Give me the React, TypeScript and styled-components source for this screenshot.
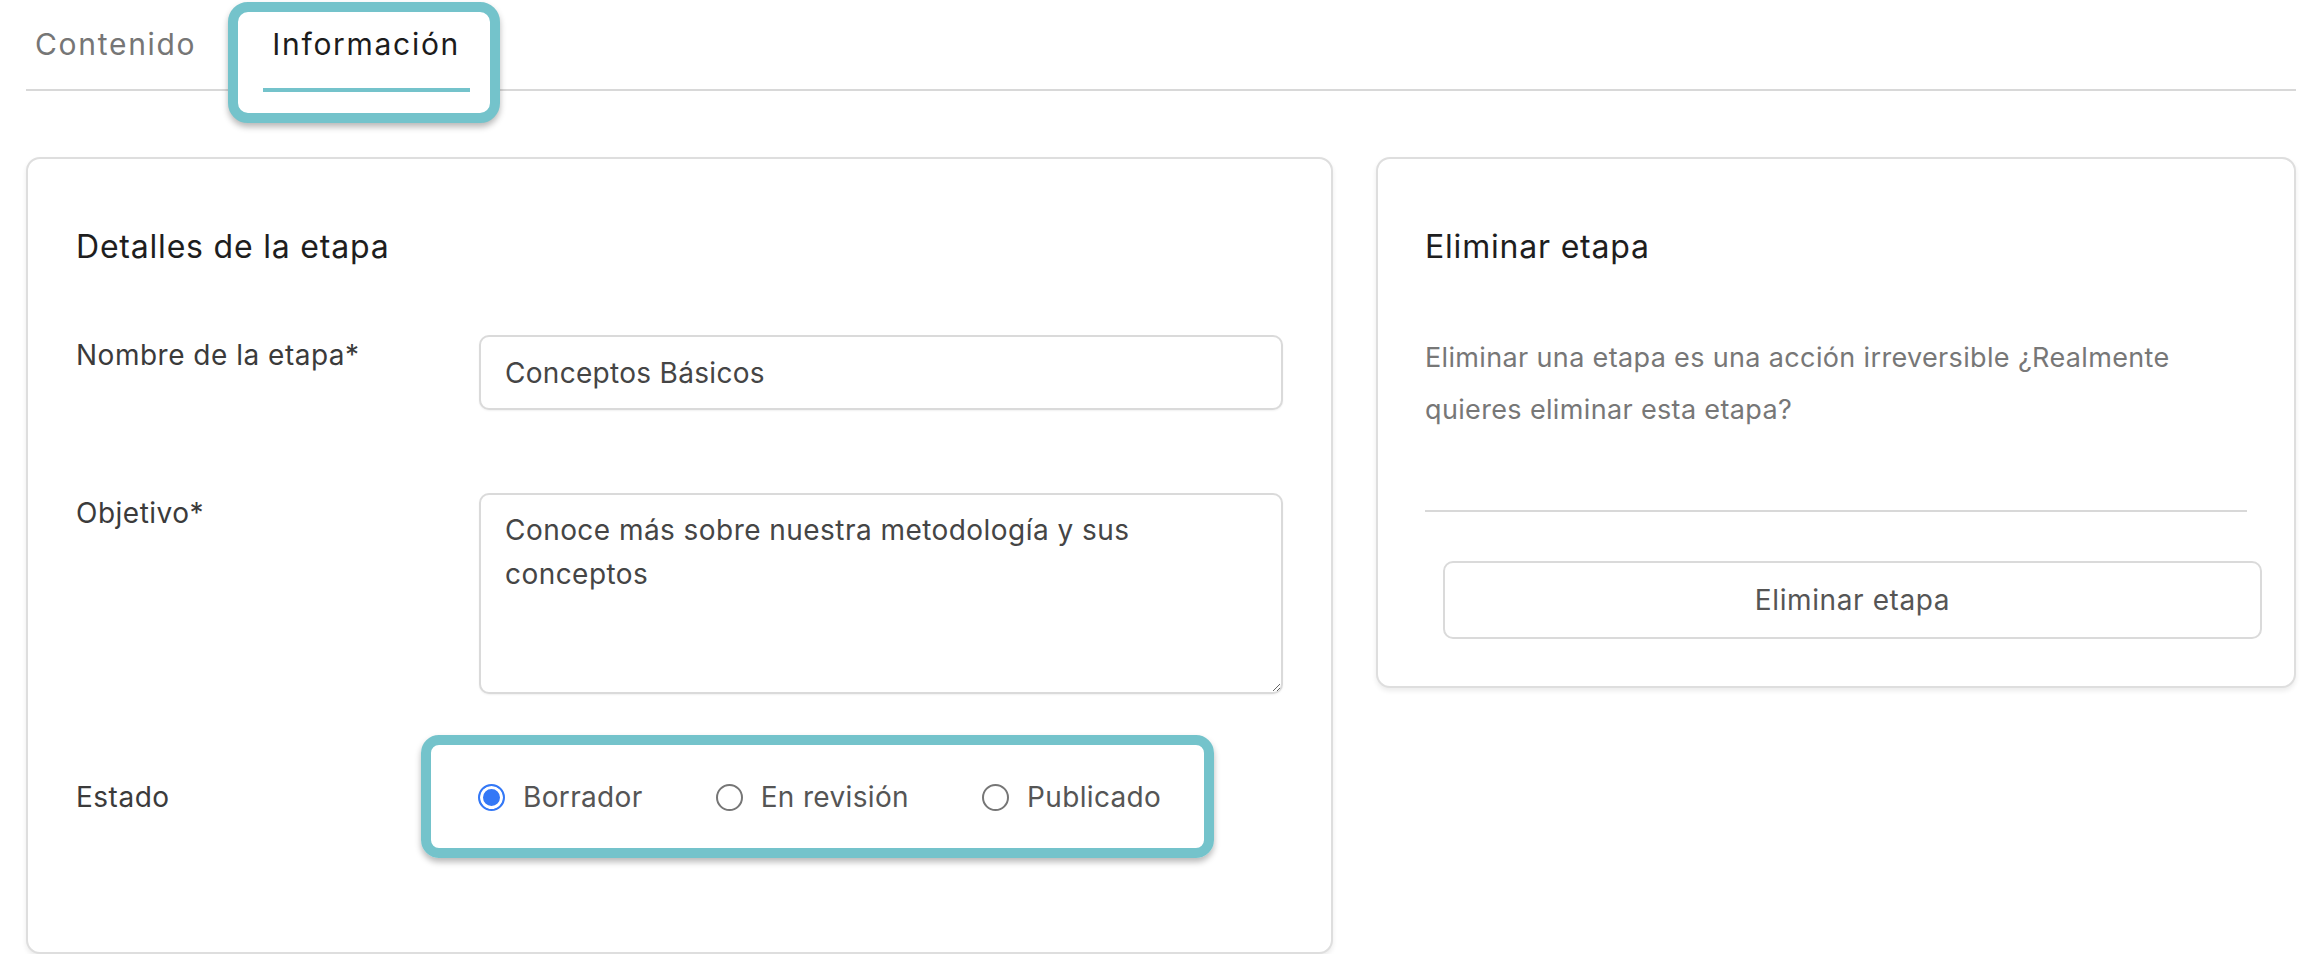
import React from 'react'
import styled, { createGlobalStyle } from 'styled-components'

const TEAL = '#74c3cb'

const GlobalStyle = createGlobalStyle`
  body {
    margin: 0;
    background: #ffffff;
    font-family: Inter, 'Noto Sans', sans-serif;
    letter-spacing: 0.4px;
  }
  * {
    box-sizing: border-box;
  }
`

const Page = styled.div`
  padding: 0 24px 0 26px;
`

const TabBar = styled.nav`
  display: flex;
  align-items: flex-end;
  gap: 57px;
  height: 91px;
  border-bottom: 2px solid #d8d8d8;
`

const Tab = styled.div<{ $active?: boolean; $callout?: boolean }>`
  position: relative;
  z-index: 1;
  height: 92px;
  margin-bottom: -3px;
  padding: 24px 10px 0 9px;
  font-size: 30px;
  line-height: 40px;
  letter-spacing: 1.7px;
  color: ${({ $active }) => ($active ? '#1c1c1c' : '#767676')};

  &::after {
    content: '';
    position: absolute;
    left: 0;
    right: 0;
    bottom: 0;
    height: 4px;
    background: ${({ $active }) => ($active ? TEAL : 'transparent')};
  }

  ${({ $callout }) =>
    $callout &&
    `
    &::before {
      content: '';
      position: absolute;
      z-index: -1;
      left: -35px;
      right: -30px;
      top: 2px;
      bottom: -31px;
      border: 10px solid ${TEAL};
      border-radius: 20px;
      background: #ffffff;
      box-shadow: 0 4px 6px rgba(0, 0, 0, 0.28);
    }
  `}
`

const Columns = styled.div`
  display: grid;
  grid-template-columns: 1307fr 920fr;
  gap: 43px;
  align-items: start;
  margin-top: 66px;
`

const Card = styled.section<{ $padX: number; $padBottom: number }>`
  background: #ffffff;
  border: 2px solid #dedede;
  border-radius: 14px;
  box-shadow: 0 3px 5px rgba(0, 0, 0, 0.08);
  padding: 68px ${({ $padX }) => $padX}px ${({ $padBottom }) => $padBottom}px;
`

const CardTitle = styled.h2`
  margin: 0;
  font-size: 32px;
  line-height: 40px;
  font-weight: 400;
  letter-spacing: 0.8px;
  color: #1e1e1e;
`

const Form = styled.div`
  display: flex;
  flex-direction: column;
  gap: 83px;
  margin-top: 68px;
`

const FormRow = styled.div<{ $align?: 'start' | 'center' }>`
  display: grid;
  grid-template-columns: 403px 1fr;
  align-items: ${({ $align }) => $align || 'start'};
`

const Label = styled.label`
  font-size: 28px;
  line-height: 40px;
  letter-spacing: 0.5px;
  color: #3b3b3b;
`

const TextInput = styled.input`
  width: 100%;
  height: 75px;
  padding: 0 24px;
  border: 2px solid #dadada;
  border-radius: 10px;
  box-shadow: 0 1px 2px rgba(0, 0, 0, 0.06);
  font-family: inherit;
  font-size: 28px;
  letter-spacing: 0.3px;
  color: #454545;
  outline: none;
`

const TextArea = styled.textarea`
  display: block;
  width: 100%;
  height: 201px;
  padding: 13px 24px;
  border: 2px solid #dadada;
  border-radius: 10px;
  box-shadow: 0 1px 2px rgba(0, 0, 0, 0.06);
  font-family: inherit;
  font-size: 28px;
  line-height: 44px;
  letter-spacing: 0.45px;
  color: #454545;
  outline: none;
`

const RadioGroup = styled.div`
  position: relative;
  justify-self: start;
  display: flex;
  align-items: center;
  gap: 73px;
  height: 40px;
  margin-left: -1px;

  &::before {
    content: '';
    position: absolute;
    left: -57px;
    right: -53px;
    top: -42px;
    bottom: -41px;
    border: 10px solid ${TEAL};
    border-radius: 18px;
    box-shadow: 0 4px 6px rgba(0, 0, 0, 0.28);
    pointer-events: none;
  }
`

const RadioOption = styled.label`
  display: flex;
  align-items: center;
  gap: 18px;
  font-size: 28px;
  line-height: 40px;
  letter-spacing: 0.35px;
  color: #555555;
`

const Radio = styled.input`
  appearance: none;
  width: 27px;
  height: 27px;
  margin: 0;
  border: 2px solid #767676;
  border-radius: 50%;
  background: #ffffff;

  &:checked {
    border-color: #3478f6;
    background: #3478f6;
    box-shadow: inset 0 0 0 3px #ffffff;
  }
`

const Paragraph = styled.p`
  margin: 65px 0 0;
  font-size: 27px;
  line-height: 52px;
  letter-spacing: 0.35px;
  color: #777777;
`

const Divider = styled.hr`
  height: 2px;
  margin: 74px 0 0;
  border: 0;
  background: #d8d8d8;
`

const OutlineButton = styled.button`
  display: block;
  width: calc(100% - 3px);
  height: 78px;
  margin: 49px 0 0 18px;
  border: 2px solid #dadada;
  border-radius: 10px;
  background: #ffffff;
  font-family: inherit;
  font-size: 28px;
  letter-spacing: 0.6px;
  color: #555555;
`

const estados = ['Borrador', 'En revisión', 'Publicado']

export default function App() {
  return (
    <Page>
      <GlobalStyle />
      <TabBar>
        <Tab>Contenido</Tab>
        <Tab $active $callout>
          Información
        </Tab>
      </TabBar>

      <Columns>
        <Card $padX={48} $padBottom={135}>
          <CardTitle>Detalles de la etapa</CardTitle>
          <Form>
            <FormRow>
              <Label htmlFor="nombre">Nombre de la etapa*</Label>
              <TextInput id="nombre" readOnly defaultValue="Conceptos Básicos" />
            </FormRow>
            <FormRow>
              <Label htmlFor="objetivo">Objetivo*</Label>
              <TextArea
                id="objetivo"
                readOnly
                defaultValue="Conoce más sobre nuestra metodología y sus conceptos"
              />
            </FormRow>
            <FormRow $align="center">
              <Label>Estado</Label>
              <RadioGroup>
                {estados.map((estado, i) => (
                  <RadioOption key={estado}>
                    <Radio type="radio" name="estado" defaultChecked={i === 0} />
                    {estado}
                  </RadioOption>
                ))}
              </RadioGroup>
            </FormRow>
          </Form>
        </Card>

        <Card $padX={47} $padBottom={47}>
          <CardTitle>Eliminar etapa</CardTitle>
          <Paragraph>
            Eliminar una etapa es una acción irreversible ¿Realmente quieres eliminar esta etapa?
          </Paragraph>
          <Divider />
          <OutlineButton>Eliminar etapa</OutlineButton>
        </Card>
      </Columns>
    </Page>
  )
}
